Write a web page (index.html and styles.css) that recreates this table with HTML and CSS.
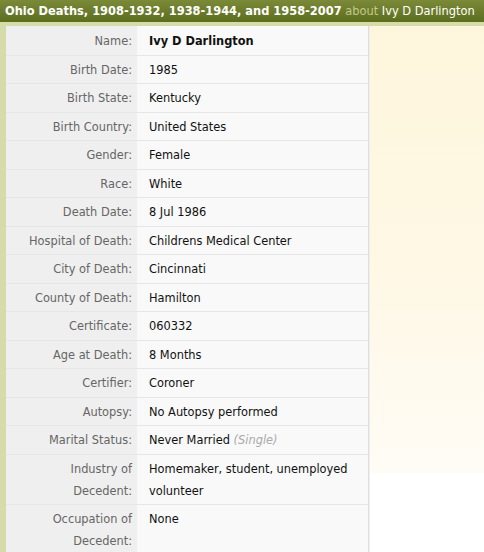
FILE: index.html
```html
<!DOCTYPE html>
<html>
<head>
<meta charset="utf-8">
<link rel="stylesheet" href="styles.css">
</head>
<body>
<div class="header"><span class="title">Ohio Deaths, 1908-1932, 1938-1944, and 1958-2007</span> <span class="about">about</span> <span class="person">Ivy D Darlington</span></div>
<div class="main">
  <div class="record">
    <div class="row"><div class="label">Name:</div><div class="value strong">Ivy D Darlington</div></div>
    <div class="row"><div class="label">Birth Date:</div><div class="value">1985</div></div>
    <div class="row"><div class="label">Birth State:</div><div class="value">Kentucky</div></div>
    <div class="row"><div class="label">Birth Country:</div><div class="value">United States</div></div>
    <div class="row"><div class="label">Gender:</div><div class="value">Female</div></div>
    <div class="row"><div class="label">Race:</div><div class="value">White</div></div>
    <div class="row"><div class="label">Death Date:</div><div class="value">8 Jul 1986</div></div>
    <div class="row"><div class="label">Hospital of Death:</div><div class="value">Childrens Medical Center</div></div>
    <div class="row"><div class="label">City of Death:</div><div class="value">Cincinnati</div></div>
    <div class="row"><div class="label">County of Death:</div><div class="value">Hamilton</div></div>
    <div class="row"><div class="label">Certificate:</div><div class="value">060332</div></div>
    <div class="row"><div class="label">Age at Death:</div><div class="value">8 Months</div></div>
    <div class="row"><div class="label">Certifier:</div><div class="value">Coroner</div></div>
    <div class="row"><div class="label">Autopsy:</div><div class="value">No Autopsy performed</div></div>
    <div class="row"><div class="label">Marital Status:</div><div class="value">Never Married <span class="note">(Single)</span></div></div>
    <div class="row"><div class="label">Industry of<br>Decedent:</div><div class="value">Homemaker, student, unemployed volunteer</div></div>
    <div class="row last"><div class="label">Occupation of<br>Decedent:</div><div class="value">None</div></div>
  </div>
  <div class="aside"></div>
</div>
</body>
</html>
```
FILE: styles.css
```css
html, body {
  margin: 0;
  padding: 0;
  background: #ffffff;
  font-family: "DejaVu Sans", Verdana, sans-serif;
}
body {
  height: 552px;
  overflow: hidden;
}
.header {
  height: 22px;
  line-height: 22px;
  padding-left: 5px;
  background: linear-gradient(#7a8a38, #5d6d1f);
  color: #ffffff;
  font-size: 12.7px;
  white-space: nowrap;
  overflow: hidden;
  font-family: "DejaVu Sans Condensed", "DejaVu Sans", sans-serif;
}
.header .title {
  font-weight: bold;
}
.header .about {
  color: #c3c98a;
}
.main {
  display: flex;
  align-items: flex-start;
  box-sizing: border-box;
  height: 530px;
  overflow: hidden;
  background: #ffffff;
  border-top: 4px solid #d5dca9;
  border-left: 6px solid #d5dca9;
}
.record {
  width: 362px;
  flex: none;
  align-self: stretch;
  border-right: 1px solid #dedede;
  box-shadow: 1px 0 0 #efefef;
  font-size: 11.4px;
  padding-top: 1px;
  background: linear-gradient(90deg, #efefef 131px, #f9f9f9 131px);
}
.row {
  display: grid;
  grid-template-columns: 131px 1fr;
  border-bottom: 1px solid #e6e6e6;
}
.row.last {
  border-bottom: none;
}
.label {
  background: #efefef;
  color: #666666;
  text-align: right;
  padding: 3px 5px 2.5px 0;
  line-height: 22px;
}
.value {
  background: #f9f9f9;
  color: #111111;
  padding: 3px 8px 2.5px 12px;
  line-height: 22px;
}
.value.strong {
  font-weight: bold;
}
.note {
  color: #aaaaaa;
  font-style: italic;
}
.aside {
  flex: 1;
  height: 447px;
  margin-left: 1px;
  background: linear-gradient(#fef6dc, #fef8e6 60%, #fffcf6);
}
```
